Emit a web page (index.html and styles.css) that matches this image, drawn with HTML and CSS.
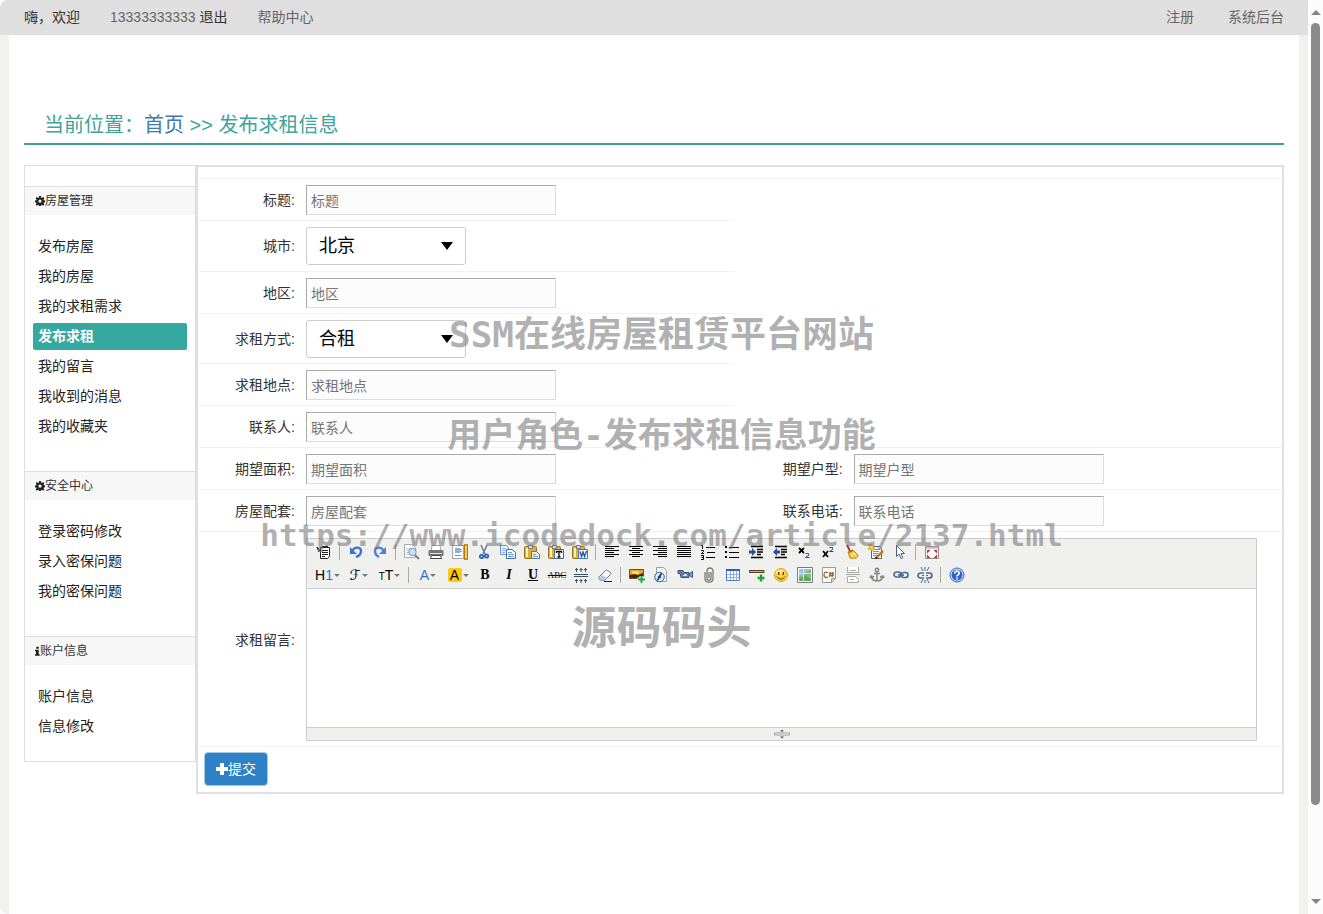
FILE: index.html
```html
<!DOCTYPE html>
<html lang="zh-CN">
<head>
<meta charset="utf-8">
<title>发布求租信息</title>
<link rel="stylesheet" href="styles.css">
</head>
<body>
<div class="page">
  <header class="topbar">
    <span class="strong">嗨，欢迎</span>
    <span class="user">13333333333 <a class="strong" href="#">退出</a></span>
    <a href="#">帮助中心</a>
    <nav class="topnav"><a href="#">注册</a><a href="#">系统后台</a></nav>
  </header>
  <main class="container">
    <h1 class="crumb">当前位置：<a href="#">首页</a> <b>&gt;&gt;</b> 发布求租信息</h1>
    <div class="columns">
      <aside class="sidebar">
        <section>
          <h2><svg class="fa" viewBox="0 0 16 16"><path fill="#222" fill-rule="evenodd" d="M6.600 0h2.800l.4 2.500 1.300.5 1.900-1.400 2 2-1.300 1.900.5 1.200 2.300.4v2.800l-2.300.4-.5 1.200 1.300 1.900-2 2-1.900-1.300-1.300.5-.4 2.300H6.600l-.4-2.300-1.300-.5-1.900 1.300-2-2 1.400-1.900-.5-1.200L0 9.900V7.100l2-.4.5-1.200L1 3.600l2-2L4.900 3l1.300-.5zM8 5.500a2.600 2.600 0 1 0 0 5.200 2.600 2.600 0 0 0 0-5.200z"/></svg>房屋管理</h2>
          <ul>
            <li><a href="#">发布房屋</a></li>
            <li><a href="#">我的房屋</a></li>
            <li><a href="#">我的求租需求</a></li>
            <li><a href="#" class="active">发布求租</a></li>
            <li><a href="#">我的留言</a></li>
            <li><a href="#">我收到的消息</a></li>
            <li><a href="#">我的收藏夹</a></li>
          </ul>
        </section>
        <section>
          <h2><svg class="fa" viewBox="0 0 16 16"><path fill="#222" fill-rule="evenodd" d="M6.600 0h2.800l.4 2.500 1.300.5 1.900-1.400 2 2-1.300 1.900.5 1.200 2.300.4v2.800l-2.300.4-.5 1.200 1.300 1.900-2 2-1.900-1.300-1.300.5-.4 2.300H6.600l-.4-2.300-1.300-.5-1.900 1.300-2-2 1.400-1.900-.5-1.200L0 9.900V7.100l2-.4.5-1.200L1 3.600l2-2L4.900 3l1.300-.5zM8 5.500a2.600 2.600 0 1 0 0 5.200 2.600 2.600 0 0 0 0-5.200z"/></svg>安全中心</h2>
          <ul>
            <li><a href="#">登录密码修改</a></li>
            <li><a href="#">录入密保问题</a></li>
            <li><a href="#">我的密保问题</a></li>
          </ul>
        </section>
        <section>
          <h2><svg class="fa info" viewBox="0 0 8 16"><path fill="#222" d="M2 1h4v3.500H2zM0 6h6v7h1.500v2.500H0V13h1.500V8.500H0z"/></svg>账户信息</h2>
          <ul>
            <li><a href="#">账户信息</a></li>
            <li><a href="#">信息修改</a></li>
          </ul>
        </section>
      </aside>
      <form class="panel">
        <div class="row short"><div class="field"><label for="title">标题:</label><input id="title" type="text" placeholder="标题"></div></div>
        <div class="row short tall"><div class="field"><label for="city">城市:</label><span class="select"><select id="city"><option>北京</option></select></span></div></div>
        <div class="row short"><div class="field"><label for="area">地区:</label><input id="area" type="text" placeholder="地区"></div></div>
        <div class="row short tall"><div class="field"><label for="mode">求租方式:</label><span class="select"><select id="mode"><option>合租</option></select></span></div></div>
        <div class="row short"><div class="field"><label for="place">求租地点:</label><input id="place" type="text" placeholder="求租地点"></div></div>
        <div class="row short"><div class="field"><label for="person">联系人:</label><input id="person" type="text" placeholder="联系人"></div></div>
        <div class="row">
          <div class="field"><label for="size">期望面积:</label><input id="size" type="text" placeholder="期望面积"></div>
          <div class="field second"><label for="type">期望户型:</label><input id="type" type="text" placeholder="期望户型"></div>
        </div>
        <div class="row">
          <div class="field"><label for="kit">房屋配套:</label><input id="kit" type="text" placeholder="房屋配套"></div>
          <div class="field second"><label for="phone">联系电话:</label><input id="phone" type="text" placeholder="联系电话"></div>
        </div>
        <div class="row editor-row">
          <label for="message">求租留言:</label>
          <div class="editor">
            <div class="toolbar">
              <div class="tools">
                <button type="button" aria-label="源代码"><svg viewBox="0 0 16 16"><path fill="#fff" stroke="#222" d="M4.500 3.500h9v9l-2 2h-7z"/><path stroke="#222" d="M6 2.500h6M6 6.500h6M6 8.500h6M6 10.500h6M6 12.500h3M1 3l4 5M1 3l2 5"/></svg></button>
                <i class="sep"></i>
                <button type="button" aria-label="后退"><svg viewBox="0 0 16 16"><path fill="none" stroke="#3f72d2" stroke-width="2.400" d="M4 7c3-5 9-4 9 0 0 3-2 5-5 6"/><path fill="#3f72d2" d="M2 3v7h7z"/></svg></button>
                <button type="button" aria-label="前进"><svg viewBox="0 0 16 16"><path fill="none" stroke="#4c80dc" stroke-width="2.400" d="M12 7C9 2 3 3 3 7c0 3 2 5 4 6"/><path fill="#4c80dc" d="M14 3v7H7z"/></svg></button>
                <i class="sep"></i>
                <button type="button" aria-label="预览"><svg viewBox="0 0 16 16"><path fill="#fff" stroke="#a9adb3" d="M.5.500h8l3 3v10H.5z"/><path stroke="#c4c8cc" d="M2 4.500h5M2 6.500h3M2 8.500h3M2 10.500h3"/><path stroke="#8c7a70" stroke-width="2" d="M11 11l4 4"/><circle cx="8.500" cy="8" r="3.700" fill="#c9e2fa" stroke="#7494bd"/></svg></button>
                <button type="button" aria-label="打印"><svg viewBox="0 0 16 16"><path fill="#fff" stroke="#aaa" d="M4 1.500h8l1 6H3z"/><rect x=".5" y="6" width="15" height="6" rx="1" fill="#777"/><path stroke="#ddd" d="M2 9.500h12"/><path fill="#fff" stroke="#444" d="M3.500 11.500h9l1 3h-11z"/></svg></button>
                <button type="button" aria-label="模板"><svg viewBox="0 0 16 16"><path fill="#fff" stroke="#555" stroke-dasharray="1 1" d="M.5 1.500h11v13H.5z"/><path fill="#8bb0dc" d="M3 4h5v5H3z"/><path stroke="#8294aa" d="M3 11.500h6M8 5.500h2M8 7.500h2"/><path fill="#efb336" stroke="#b47b10" d="M12.500.500h3v15h-3z"/><path stroke="#fff0a0" d="M13 3.500h2M13 6.500h2M13 9.500h2M13 12.500h2"/></svg></button>
                <button type="button" aria-label="剪切"><svg viewBox="0 0 16 16"><path fill="none" stroke="#68809e" stroke-width="1.600" d="M5 1l4 9M11 1L7 10"/><g fill="none" stroke="#2b62b5" stroke-width="1.800"><circle cx="5.500" cy="12.500" r="1.700"/><circle cx="10.500" cy="12" r="1.700"/></g></svg></button>
                <button type="button" aria-label="复制"><svg viewBox="0 0 16 16"><path fill="#eef6ff" stroke="#6c90c6" d="M.5 1.500h6l2 2v7h-8z"/><path stroke="#8fb0dd" d="M2 4.500h4M2 6.500h4M2 8.500h3"/><path fill="#f3f8ff" stroke="#3f6db7" d="M6.500 5.500h6l3 3v6h-9z"/><path stroke="#7199d6" d="M8 8.500h4M8 10.500h6M8 12.500h6"/></svg></button>
                <button type="button" aria-label="粘贴"><svg viewBox="0 0 16 16"><rect x=".5" y="2.500" width="12" height="12" rx="1" fill="#e0ad35" stroke="#9b7420"/><path fill="#fff3b0" d="M2 4h2v9H2z"/><path fill="#ddd" stroke="#777" d="M4.500 1.500h4v3h-4z"/><path fill="#e6edf7" stroke="#5d7396" d="M7.500 7.500h5l3 3v4h-8z"/><path stroke="#8196b8" d="M9 10.500h3M9 12.500h5"/></svg></button>
                <button type="button" aria-label="粘贴为无格式文本"><svg viewBox="0 0 16 16"><rect x=".5" y="2.500" width="12" height="12" rx="1" fill="#e0ad35" stroke="#9b7420"/><path fill="#fff3b0" d="M2 4h2v9H2z"/><path fill="#ddd" stroke="#777" d="M4.500 1.500h4v3h-4z"/><path fill="#f4f6fa" stroke="#526788" d="M6.500 5.500h9v9h-9z"/><path fill="none" stroke="#111" stroke-width="1.300" d="M8.500 9V7.500h5V9M11 7.500V13M9.500 13h3"/></svg></button>
                <button type="button" aria-label="从Word粘贴"><svg viewBox="0 0 16 16"><rect x=".5" y="2.500" width="12" height="12" rx="1" fill="#e0ad35" stroke="#9b7420"/><path fill="#fff3b0" d="M2 4h2v9H2z"/><path fill="#ddd" stroke="#777" d="M4.500 1.500h4v3h-4z"/><path fill="#eef4ff" stroke="#4c77b8" d="M6.500 5.500h9v9h-9z"/><path fill="none" stroke="#2450a4" stroke-width="1.300" d="M8 7.500l1.500 5L11 8l1.500 4.500L14.500 7"/></svg></button>
                <i class="sep"></i>
                <button type="button" aria-label="左对齐"><svg viewBox="0 0 16 16"><path stroke="#000" d="M1 2.500h14M1 4.500h9M1 6.500h14M1 8.500h9M1 10.500h14M1 12.500h9"/></svg></button>
                <button type="button" aria-label="居中"><svg viewBox="0 0 16 16"><path stroke="#000" d="M1 2.500h14M4 4.500h8M1 6.500h14M4 8.500h8M1 10.500h14M4 12.500h8"/></svg></button>
                <button type="button" aria-label="右对齐"><svg viewBox="0 0 16 16"><path stroke="#000" d="M1 2.500h14M6 4.500h9M1 6.500h14M6 8.500h9M1 10.500h14M6 12.500h9"/></svg></button>
                <button type="button" aria-label="两端对齐"><svg viewBox="0 0 16 16"><path stroke="#000" d="M1 2.500h14M1 4.500h14M1 6.500h14M1 8.500h14M1 10.500h14M1 12.500h14"/></svg></button>
                <button type="button" aria-label="编号"><svg viewBox="0 0 16 16"><path fill="none" stroke="#000" d="M6 3.500h9M7 8.500h8M6 13.500h9M1 1.500h1.500V5M1 6.500h2.500v1l-2 2H4M1 11.500h2.500v4H1M1.500 13.500h2"/></svg></button>
                <button type="button" aria-label="项目符号"><svg viewBox="0 0 16 16"><path stroke="#000" d="M5 3.500h10M5 8.500h10M5 13.500h10"/><path d="M1 2h2v2H1zM1 7h2v2H1zM1 12h2v2H1z"/></svg></button>
                <button type="button" aria-label="增加缩进"><svg viewBox="0 0 16 16"><path stroke="#000" stroke-width="1.500" d="M3 2.500h12M9 5.500h6M9 8h6M9 10.500h4M3 13.500h12"/><path fill="#284f91" d="M1 6.500h3V4l4 4-4 4V9.500H1z"/></svg></button>
                <button type="button" aria-label="减少缩进"><svg viewBox="0 0 16 16"><path stroke="#000" stroke-width="1.500" d="M3 2.500h12M9 5.500h6M9 8h6M9 10.500h4M3 13.500h12"/><path fill="#284f91" d="M8 6.500H5V4L1 8l4 4V9.500h3z"/></svg></button>
                <button type="button" aria-label="下标"><svg viewBox="0 0 16 16"><path fill="none" stroke="#000" stroke-width="1.800" d="M3 4l5 5M8 4L3 9"/><path fill="none" stroke="#284f91" d="M9.500 9.500h3v2l-3 2h4"/></svg></button>
                <button type="button" aria-label="上标"><svg viewBox="0 0 16 16"><path fill="none" stroke="#000" stroke-width="1.800" d="M3 7l5 6M8 7l-5 6"/><path fill="none" stroke="#284f91" d="M9.500 3.500h3v2l-3 2h4"/></svg></button>
                <button type="button" aria-label="清理代码"><svg viewBox="0 0 16 16"><path stroke="#b1342e" stroke-width="2" d="M3 1l3 6"/><path fill="#f4c431" stroke="#c18a16" d="M4 8l5-2 5 5c0 3-3 4-8 3z"/><path stroke="#ffe990" stroke-width="1.500" d="M7 9l2 4M9 8l3 4"/><path stroke="#b1342e" d="M5 8.500l4-2"/></svg></button>
                <button type="button" aria-label="一键排版"><svg viewBox="0 0 16 16"><path fill="#f7f9fc" stroke="#55657c" d="M3.500 2.500h8l2 2v10h-10z"/><path stroke="#7a8da8" d="M6 5.500h6M5 7.500h6M5 9.500h5M5 11.500h4"/><path fill="#f7d94c" stroke="#d9a520" d="M3 0l1 2 2-1-1 2 2 2H5L4 7 3 5H0l2-1.500L0 1h2z"/><path stroke="#c47c2b" stroke-width="2.500" d="M15 7l-6 6"/><path stroke="#222" stroke-width="2" d="M9 13l-1.500 1.500"/></svg></button>
                <button type="button" aria-label="全选"><svg viewBox="0 0 16 16"><path fill="#fff" stroke="#47618e" d="M4.500 1.500v11l2.500-2.500 2 4.500 1.800-.8L9 9.500h3.500z"/></svg></button>
                <i class="sep"></i>
                <button type="button" aria-label="全屏显示"><svg viewBox="0 0 16 16"><path fill="#fafafa" stroke="#9a8b8b" d="M1.500 2.500h13v12h-13z"/><path stroke="#d3c2c2" stroke-width="2" d="M2 4h12"/><path fill="#c32f2f" d="M3 6h3.500L3 9.500zM13 6H9.500L13 9.500zM3 14h3.500L3 10.500zM13 14H9.500l3.500-3.500z"/></svg></button>
              </div>
              <div class="tools">
                <button type="button" class="wide" aria-label="段落">H<em>1</em><i class="caret"></i></button>
                <button type="button" class="wide" aria-label="字体"><span class="script">ℱ</span><i class="caret"></i></button>
                <button type="button" class="wide" aria-label="文字大小"><small>T</small>T<i class="caret"></i></button>
                <i class="sep"></i>
                <button type="button" class="color" aria-label="文字颜色"><em>A</em><i class="caret"></i></button>
                <button type="button" class="color" aria-label="文字背景"><span class="mark">A</span><i class="caret"></i></button>
                <button type="button" class="serif" aria-label="粗体">B</button>
                <button type="button" class="serif italic" aria-label="斜体">I</button>
                <button type="button" class="serif under" aria-label="下划线">U</button>
                <button type="button" class="strike" aria-label="删除线">ABC</button>
                <button type="button" aria-label="行距"><svg viewBox="0 0 16 16"><path stroke="#3f4f66" d="M1 7.500h14M1 9.500h14M3.500 1v4M8 1v4M12.500 1v4M3.500 12v4M8 12v4M12.500 12v4M2 2.500h3M6.500 2.500h3M11 2.500h3M2 13.500h3M6.500 13.500h3M11 13.500h3"/></svg></button>
                <button type="button" aria-label="删除格式"><svg viewBox="0 0 16 16"><path fill="#f6faff" stroke="#59739e" d="M1.500 10.500l7-7q1-1 2 0l3 2q1 1 0 2l-6 6h-4z"/><path fill="#b9cbe6" d="M2 11l3-3 5 3-3 2.500H4z"/><path stroke="#222" d="M7 14.500h8"/></svg></button>
                <i class="sep"></i>
                <button type="button" aria-label="图片"><svg viewBox="0 0 16 16"><path fill="#f0a321" stroke="#70511f" d="M.5 2.500h14v9H.5z"/><path fill="#ffd75c" d="M3 4h7v3H3z"/><path fill="#362c19" d="M1 8l4-1 4 1 5-2v5H1z"/><path stroke="#fff" stroke-width="4" d="M8.500 12.500h7.500M12.500 9v7"/><path stroke="#20a33b" stroke-width="2" d="M9 12.500h7M12.500 9v7"/></svg></button>
                <button type="button" aria-label="Flash"><svg viewBox="0 0 16 16"><path fill="#f5f6f7" stroke="#9ca1a7" d="M3.500.500h7l3 3v11h-10z"/><circle cx="6.500" cy="10" r="4.800" fill="#dbe8f5" stroke="#41658f"/><path fill="none" stroke="#204b7e" stroke-width="1.800" d="M9 7c-3 0-2 5-5 6M5 10h3"/></svg></button>
                <button type="button" aria-label="视音频"><svg viewBox="0 0 16 16"><path fill="#6282ad" stroke="#36557e" d="M1 3.500h5l1 2h5v5H4l-1-4H1z"/><path fill="#d6e3f4" d="M6 7h4v2H6z"/><path fill="#8ea9ca" stroke="#36557e" d="M12.500 6.500l3-2v6l-3-2z"/><path stroke="#bd3d3d" d="M5 7.500h2"/></svg></button>
                <button type="button" aria-label="插入文件"><svg viewBox="0 0 16 16"><path fill="none" stroke="#777" stroke-width="1.300" d="M4 5v6.500c0 5 8 5 8 0V4c0-4-6-4-6 0v7c0 3 4 3 4 0V5M8 5v6"/></svg></button>
                <button type="button" aria-label="表格"><svg viewBox="0 0 16 16"><path fill="#fff" stroke="#507dc1" d="M1.500 2.500h13v11h-13z"/><path stroke="#315fae" stroke-width="2" d="M1 3h14"/><path stroke="#8eafe0" d="M2 7.500h12M2 10.500h12M5.500 4v9M8.500 4v9M11.500 4v9"/></svg></button>
                <button type="button" aria-label="插入横线"><svg viewBox="0 0 16 16"><path fill="#d5ae61" stroke="#54401c" d="M0 3.500h15v2H0z"/><path stroke="#20a33b" stroke-width="2.400" d="M8.500 11h7M12 7.500v7"/></svg></button>
                <button type="button" aria-label="表情"><svg viewBox="0 0 16 16"><circle cx="8" cy="8" r="6.500" fill="#fbd23e" stroke="#e2a01c"/><ellipse cx="7" cy="5" rx="4" ry="2" fill="#ffed91"/><path fill="#6a3e00" d="M5 5h1.500v3H5zM9.500 5H11v3H9.500z"/><path fill="none" stroke="#6a3e00" d="M4 9.500c2 3.500 6 3.500 8 0"/></svg></button>
                <button type="button" aria-label="Google地图"><svg viewBox="0 0 16 16"><path fill="#fff" stroke="#757f7a" d="M.5.500h15v15H.5z"/><path fill="#9fc2e8" d="M2 2h12v12H2z"/><path fill="#86b878" d="M2 9l5-1 3-4 4-1v11H2z"/><path fill="#5fa26b" d="M2 12l6-3 6 3v2H2z"/><path stroke="#d4e5d9" d="M2 6.500h12M6.500 2v12"/></svg></button>
                <button type="button" aria-label="插入程序代码"><svg viewBox="0 0 16 16"><path fill="#fff" stroke="#999" d="M1.500.500h13v11l-4 4h-9z"/><path fill="#ddd" stroke="#999" d="M14.500 11.500h-4v4z"/><path fill="none" stroke="#a2612e" stroke-width="1.300" d="M7 6C4.500 4 3 5.500 3 8s2 3 4 2M9.500 5l-1 5M12 5l-1 5M8 6.500h5M8 8.700h5"/></svg></button>
                <button type="button" aria-label="插入分页符"><svg viewBox="0 0 16 16"><path fill="#fff" stroke="#aaa" d="M2.500 0v5.500h11V0M2.500 15.500v-6h8l3 3v3z"/><path stroke="#aaa" d="M5 3.500h6M1 7.500h14M5 12.500h4"/></svg></button>
                <button type="button" aria-label="锚点"><svg viewBox="0 0 16 16"><g fill="none" stroke="#858585" stroke-width="1.500"><circle cx="8" cy="3" r="1.700"/><path d="M8 5v9M5 6.500h6M2 9c1 4 3 5 6 5s5-1 6-5M1 11l1-2 3 1M15 11l-1-2-3 1"/></g></svg></button>
                <button type="button" aria-label="超级链接"><svg viewBox="0 0 16 16"><g fill="none" stroke="#496a98" stroke-width="1.700"><rect x="1" y="5" width="7" height="5" rx="2.500"/><rect x="8" y="5.500" width="7" height="5" rx="2.500"/><path d="M5 8h6"/></g></svg></button>
                <button type="button" aria-label="取消超级链接"><svg viewBox="0 0 16 16"><g fill="none" stroke="#496a98" stroke-width="1.700"><path d="M7 11H4q-3 0-3-2.500T4 6h3M9 11h3q3 0 3-2.500T12 6H9"/></g><path stroke="#496a98" d="M4 0l2 4M8 0v4M12 0l-2 4M4 16l2-4M8 16v-3M12 16l-2-4M5 8.500h2M9 8.500h2"/></svg></button>
                <i class="sep"></i>
                <button type="button" aria-label="关于"><svg viewBox="0 0 16 16"><circle cx="8" cy="8" r="7" fill="#dce9fb" stroke="#3568b8"/><circle cx="8" cy="8" r="5.500" fill="#2863d0"/><path fill="none" stroke="#fff" stroke-width="1.700" d="M5.800 6.500c0-3 4.500-3 4.500-.5C10.300 8 8 7.500 8 9.500M8 10.500v2"/></svg></button>
              </div>
            </div>
            <textarea id="message"></textarea>
            <div class="status"><svg viewBox="0 0 16 10"><path fill="#555" d="M6 2.500h4l-2-2zM6 7.500h4l-2 2z"/><path fill="#fff" stroke="#999" d="M.5 4h15v2H.5z"/></svg></div>
          </div>
        </div>
        <div class="row submit-row"><button type="submit" class="submit"><svg viewBox="0 0 12 12"><path fill="#fff" d="M4 0h4v4h4v4H8v4H4V8H0V4h4z"/></svg>提交</button></div>
      </form>
    </div>
  </main>
</div>
<div class="scrollbar"><i class="up"></i><i class="thumb"></i><i class="rest"></i><i class="down"></i></div>
<div class="watermark">
  <p class="wm-title">SSM在线房屋租赁平台网站</p>
  <p class="wm-sub">用户角色-发布求租信息功能</p>
  <p class="wm-url">https://www.icodedock.com/article/2137.html</p>
  <p class="wm-name">源码码头</p>
</div>
</body>
</html>
```
FILE: styles.css
```css
*, *::before, *::after { box-sizing: border-box; }
body {
  margin: 0;
  min-height: 100vh;
  display: flex;
  position: relative;
  background: #fcfcfc;
  color: #333;
  font: 14px/20px "Liberation Sans", "Noto Sans CJK SC", sans-serif;
}
a { color: inherit; text-decoration: none; }
input, select, button, textarea { font: inherit; }
.page {
  flex: 1;
  min-width: 0;
  display: flex;
  flex-direction: column;
  background: #f1f2f0;
  border-radius: 8px 0 0 8px;
  overflow: hidden;
}
.topbar {
  display: flex;
  align-items: center;
  gap: 30px;
  height: 35px;
  padding: 0 24px 2px;
  background: #dfdfdf;
  color: #666;
}
.strong { color: #333; }
.topnav { display: flex; gap: 34px; margin-left: auto; }
.container {
  flex: 1;
  margin: 0 9px;
  padding: 70px 15px 20px;
  background: #fff;
}
.crumb {
  margin: 0 0 20px;
  padding: 3px 0 0 20px;
  border-bottom: 2px solid #3fa097;
  color: #3fa49c;
  font-size: 20px;
  font-weight: 400;
  line-height: 35px;
}
.crumb a { color: #4078b0; }
.crumb b { font-weight: 400; }
.columns { display: flex; align-items: flex-start; }

.sidebar {
  flex: none;
  width: 172px;
  display: flex;
  flex-direction: column;
  gap: 10px;
  padding-top: 20px;
  border: 1px solid #ddd;
}
.sidebar h2 {
  display: flex;
  align-items: center;
  height: 29px;
  margin: 0;
  padding-left: 10px;
  border-top: 1px solid #ddd;
  background: #f7f7f7;
  font-size: 12px;
  font-weight: 400;
}
.fa { width: 10px; height: 10px; }
.info { width: 5px; }
.sidebar ul {
  display: grid;
  gap: 3px;
  margin: 0;
  padding: 18px 8px 21px;
  list-style: none;
}
.sidebar li a {
  display: block;
  padding-left: 5px;
  border-radius: 2px;
  color: #222;
  line-height: 27px;
}
.sidebar li .active { background: #35a99f; color: #fff; font-weight: 700; }

.panel {
  flex: 1;
  min-width: 0;
  border: 2px solid #dfdfe5;
}
.panel::before {
  content: "";
  display: block;
  height: 12px;
  border-bottom: 1px solid #f2f2f2;
}
.row {
  display: flex;
  align-items: center;
  min-height: 42px;
  border-top: 1px solid #f2f2f2;
}
.row:first-child { min-height: 41px; border-top: 0; }
.short { width: 49.5%; }
.tall { min-height: 51px; }
.tall ~ .tall { min-height: 50px; }
.field { display: flex; align-items: center; width: 49.5%; gap: 11px; }
.short .field { width: 100%; }
.row label { flex: none; width: 97px; text-align: right; }
.row .second label { width: 108px; }
.field input {
  width: 250px;
  height: 30px;
  padding: 2px 4px 0;
  border: 1px solid #ddd;
  border-top-color: #aaa;
  border-left-color: #aaa;
  background: #fcfcfc;
}
.field input::placeholder { color: #757575; opacity: 1; }
.select { position: relative; width: 160px; }
.select::after {
  content: "";
  position: absolute;
  right: 13px;
  top: 15px;
  border: 6px solid transparent;
  border-top: 8px solid #000;
  border-bottom: 0;
  pointer-events: none;
}
.select select {
  display: block;
  width: 100%;
  height: 38px;
  padding: 0 12px;
  border: 1px solid #ccc;
  border-radius: 3px;
  background: #fff;
  color: #000;
  font-size: 18px;
  appearance: none;
}
.editor-row { gap: 11px; padding: 6px 25px 5px 0; }
.editor { flex: 1; min-width: 0; border: 1px solid #ccc; }
.toolbar {
  display: grid;
  gap: 1px;
  padding: 2px 5px;
  border-bottom: 1px solid #ccc;
  background: #f0f0ee;
}
.tools { display: flex; align-items: center; height: 22px; }
.tools button {
  display: flex;
  align-items: center;
  justify-content: center;
  width: 24px;
  height: 22px;
  padding: 0;
  border: 0;
  background: none;
  color: #000;
}
.tools svg { width: 16px; height: 16px; }
.sep { width: 8px; height: 16px; background: linear-gradient(#aaa, #aaa) 3px 0 / 1px 100% no-repeat; }
.tools .wide { width: 31px; }
.tools .color { width: 30px; }
.tools em { color: #2b6fdd; font-style: normal; }
.tools small { font-size: 10px; line-height: 20px; padding-top: 3px; }
.script { font-family: "DejaVu Sans", sans-serif; font-size: 14px; }
.caret {
  margin-left: 1px;
  border: 3px solid transparent;
  border-top-color: #777;
  border-bottom: 0;
}
.mark { width: 14px; border-radius: 2px; background: #ffc90e; line-height: 14px; }
.tools .serif { font-family: "Liberation Serif", serif; font-weight: 700; }
.tools .italic { font-style: italic; }
.tools .under { text-decoration: underline; }
.tools .strike { font: 9px "Liberation Serif", serif; text-decoration: line-through; }
.editor textarea {
  display: block;
  width: 100%;
  height: 138px;
  border: 0;
  outline: 0;
  resize: none;
}
.status {
  display: flex;
  justify-content: center;
  align-items: center;
  height: 13px;
  border-top: 1px solid #ccc;
  background: #f0f0ee;
}
.status svg { width: 16px; height: 10px; }
.submit-row { align-items: flex-start; height: 46px; padding: 5px 6px 0; }
.submit {
  display: flex;
  align-items: center;
  height: 34px;
  padding: 0 11px;
  border: 1px solid #a5c8e6;
  border-radius: 4px;
  background: #2f81c5;
  color: #fff;
}
.submit svg { width: 12px; height: 12px; }

.scrollbar {
  flex: none;
  position: sticky;
  top: 0;
  width: 15px;
  height: 100vh;
  display: flex;
  flex-direction: column;
  align-items: center;
  padding: 10px 0;
}
.up, .down { border: 5px solid transparent; }
.up { border-bottom-color: #858585; border-top: 0; margin-bottom: 8px; }
.down { border-top-color: #858585; border-bottom: 0; }
.thumb { flex: 782; width: 9px; border-radius: 5px; background: #8b8b8b; }
.rest { flex: 94; }

.watermark {
  position: absolute;
  inset: 0;
  padding-top: 285px;
  overflow: hidden;
  pointer-events: none;
  color: rgba(110, 110, 110, 0.54);
  font-family: "DejaVu Sans Mono", "Noto Sans CJK SC", monospace;
  font-weight: 700;
  text-align: center;
  white-space: nowrap;
}
.watermark p { margin: 0; line-height: 100px; }
.wm-title { font-size: 36px; }
.wm-sub { font-size: 34px; }
.wm-url { font-size: 31px; }
.watermark .wm-name { font-size: 45px; line-height: 88px; }
```
